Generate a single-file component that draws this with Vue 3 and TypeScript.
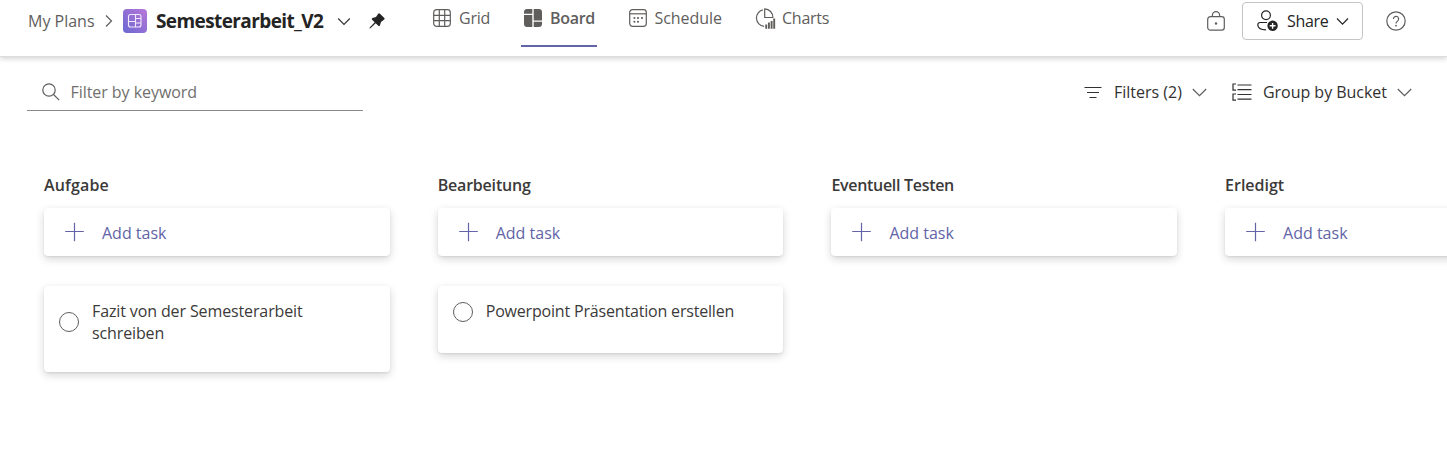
<script setup lang="ts">
interface Bucket {
  name: string
  key: string
  tasks: { key: string; lines: string[] }[]
}

const buckets: Bucket[] = [
  { name: 'Aufgabe', key: 'aufgabe', tasks: [{ key: 'fazit', lines: ['Fazit von der Semesterarbeit', 'schreiben'] }] },
  { name: 'Bearbeitung', key: 'bearbeitung', tasks: [{ key: 'powerpoint', lines: ['Powerpoint Präsentation erstellen'] }] },
  { name: 'Eventuell Testen', key: 'testen', tasks: [] },
  { name: 'Erledigt', key: 'erledigt', tasks: [] },
]
</script>

<template>
  <div class="planner">
    <header class="topbar">
      <nav class="crumbs">
        <span class="plans">My Plans</span>
        <svg class="crumb-arrow" width="8" height="14" viewBox="0 0 8 14"><path d="M1 1.5 6.5 7 1 12.5" /></svg>
        <svg class="logo" width="24" height="24" viewBox="0 0 24 24">
          <defs>
            <linearGradient id="logo-fill" x1="0" y1="1" x2="1" y2="0">
              <stop offset="0" stop-color="#6a68d2" />
              <stop offset="1" stop-color="#b877d8" />
            </linearGradient>
          </defs>
          <rect width="24" height="24" rx="4" fill="url(#logo-fill)" />
          <g fill="none" stroke="#f3e9fc" stroke-width="1.1">
            <rect x="5.500" y="5.500" width="12.500" height="12.500" rx="2" />
            <path d="M12.500 5.500V18M5.500 12.500h7M12.500 9.500h5.500M12.500 14h5.500" />
          </g>
        </svg>
        <h1 class="title">Semesterarbeit_V2</h1>
        <svg class="title-chevron" width="14" height="9" viewBox="0 0 14 9"><path d="m1.200 1.500 5.800 5.800 5.800-5.800" /></svg>
        <svg class="pin" width="16" height="16" viewBox="0 0 16 16">
          <path d="M9.200.7a1 1 0 0 1 1.500-.1l4.600 4.500a1 1 0 0 1-.1 1.500L12 8.900l-1.100 3.500a1 1 0 0 1-1.600.4L6.700 10.200 1.400 15.300.4 15.600.7 14.600 5.700 9.300 3.100 6.700a1 1 0 0 1 .4-1.600L7 4z" />
        </svg>
      </nav>

      <nav class="tabs">
        <a class="tab grid">
          <svg width="18" height="18" viewBox="0 0 18 18">
            <rect x=".7" y=".7" width="16.600" height="16.600" rx="2.800" />
            <path d="M6.300.7v16.600M11.700.7v16.600M.7 6.300h16.600M.7 11.700h16.600" />
          </svg>
          <span class="tab-label">Grid</span>
        </a>
        <a class="tab board">
          <svg width="18" height="18" viewBox="0 0 18 18">
            <path class="solid" d="M3.200 0h5.100v4.700H0V3.200A3.200 3.200 0 0 1 3.200 0zM0 6h8.300v12H3.200A3.200 3.200 0 0 1 0 14.800zM9.700 0h5.100A3.200 3.200 0 0 1 18 3.200v8.300H9.700zM9.700 12.800H18v2a3.200 3.200 0 0 1-3.200 3.200H9.700z" />
          </svg>
          <span class="tab-label">Board</span>
        </a>
        <a class="tab schedule">
          <svg width="18" height="18" viewBox="0 0 18 18">
            <rect x=".7" y=".7" width="16.600" height="16.600" rx="2.800" />
            <path d="M.7 4.800h16.600" />
            <g class="solid">
              <circle cx="9" cy="9" r="1.050" /><circle cx="13" cy="9" r="1.050" /><circle cx="5.400" cy="9" r="1.050" />
              <circle cx="5.400" cy="12.800" r="1.050" /><circle cx="9" cy="12.800" r="1.050" />
            </g>
          </svg>
          <span class="tab-label">Schedule</span>
        </a>
        <a class="tab charts">
          <svg width="21" height="21" viewBox="0 0 21 21">
            <path d="M7.800 1.800A8.400 8.400 0 0 0 9 18.300" />
            <path d="M9.700.9v8.600h8.200A8.400 8.400 0 0 0 9.700.9z" />
            <path class="bars" d="M11.200 20.700v-4.200M13.900 20.700v-6.200M16.600 20.700v-7.600M19.200 20.700V10.600" />
          </svg>
          <span class="tab-label">Charts</span>
        </a>
      </nav>

      <div class="actions">
        <svg class="lock" width="18" height="20" viewBox="0 0 18 20">
          <rect x=".7" y="5.700" width="16.600" height="13.500" rx="2.600" />
          <path d="M5.400 5.700V4.200a3.600 3.600 0 0 1 7.200 0v1.500" />
          <circle class="dot" cx="9" cy="12.500" r="1.200" />
        </svg>
        <button class="share" type="button">
          <svg class="person" width="21" height="22" viewBox="0 0 21 22">
            <circle cx="9" cy="5.200" r="4.400" />
            <path d="M10 12.500H3.100A2.300 2.300 0 0 0 .8 14.800c0 3 3 5 8.200 5" />
            <circle class="badge" cx="15.600" cy="15.800" r="5.200" />
            <path class="plus" d="M15.600 12.900v5.800M12.700 15.800h5.800" />
          </svg>
          <span class="share-label">Share</span>
          <svg class="share-chevron" width="13" height="9" viewBox="0 0 13 9"><path d="m1 1.500 5.500 5.600L12 1.500" /></svg>
        </button>
        <svg class="help" width="20" height="20" viewBox="0 0 20 20">
          <circle cx="10" cy="10" r="9.200" />
          <path d="M7.400 7.900a2.600 2.600 0 1 1 4.300 2C10.600 10.800 10 11.300 10 12.500" />
          <circle class="dot" cx="10" cy="14.700" r=".9" />
        </svg>
      </div>
    </header>

    <div class="toolbar">
      <label class="search">
        <svg width="18" height="18" viewBox="0 0 18 18"><circle cx="7" cy="7" r="6.200" /><path d="m11.500 11.500 5.700 5.700" /></svg>
        <span class="search-label">Filter by keyword</span>
      </label>
      <div class="view-options">
        <svg class="filter-icon" width="18" height="13" viewBox="0 0 18 13"><path d="M.5 1.500h17M3 6.500h12M5.500 11.500h7" /></svg>
        <span class="filters-label">Filters (2)</span>
        <svg class="chev" width="15" height="9" viewBox="0 0 15 9"><path d="m.8 1 6.700 6.700L14.200 1" /></svg>
        <svg class="group-icon" width="20" height="18" viewBox="0 0 20 18">
          <path d="M5.500 2h14M5.500 6.700h14M5.500 11.500h14M5.500 16.200h14" />
          <path d="M4 1H1v6.200h3M4 11H1v6.200h3" />
        </svg>
        <span class="group-label">Group by Bucket</span>
        <svg class="chev last" width="15" height="9" viewBox="0 0 15 9"><path d="m.8 1 6.700 6.700L14.200 1" /></svg>
      </div>
    </div>

    <main class="board-area">
      <section v-for="bucket in buckets" :key="bucket.key" class="bucket" :class="bucket.key">
        <h2 class="bucket-name"><span>{{ bucket.name }}</span></h2>
        <button class="card add" type="button">
          <svg width="20" height="20" viewBox="0 0 20 20"><path d="M10.500 .8v18.400M1.200 9.500h18.600" /></svg>
          <span>Add task</span>
        </button>
        <article v-for="task in bucket.tasks" :key="task.key" class="card task" :class="task.key">
          <div class="task-main">
            <i class="check"></i>
            <p class="task-title"><span v-for="line in task.lines" :key="line">{{ line }}</span></p>
          </div>
        </article>
      </section>
    </main>
  </div>
</template>

<style>
html,
body {
  background: #fff;
  overflow: hidden;
}
</style>

<style scoped>
.planner {
  width: 1447px;
  height: 451px;
  overflow: hidden;
  background: #fff;
  color: #3b3a39;
  font: 400 16px/22px 'Open Sans', 'Noto Sans', sans-serif;
  white-space: nowrap;
}
svg {
  display: block;
  flex: none;
  overflow: visible;
  fill: none;
  stroke: currentColor;
  stroke-width: 1.2;
}
.logo {
  stroke: none;
}
h1,
h2,
p {
  margin: 0;
}
button {
  font: inherit;
  color: inherit;
  padding: 0;
}
.topbar {
  display: flex;
  height: 56px;
  border-bottom: 1px solid #dcdcdc;
  box-shadow: 0 2px 5px rgba(0, 0, 0, 0.17);
}
.crumbs {
  display: flex;
  align-items: center;
  height: 42px;
  width: 405px;
  padding-left: 28px;
}
.plans {
  width: 77px;
  color: #605e5c;
}
.crumb-arrow {
  color: #605e5c;
  margin-right: 10px;
}
.title {
  width: 181px;
  margin-left: 9px;
  color: #242424;
  font-size: 19px;
  font-weight: 700;
  letter-spacing: -0.6px;
}
.title-chevron {
  color: #333;
}
.pin {
  margin-left: 18px;
  fill: #242424;
  stroke: none;
}
.tabs {
  display: flex;
  color: #605e5c;
}
.tab {
  display: flex;
  align-items: center;
  box-sizing: border-box;
  height: 47px;
  padding-bottom: 9px;
  border-bottom: 2px solid transparent;
}
.tab-label {
  margin-left: 8px;
}
.grid {
  width: 88px;
}
.grid .tab-label {
  letter-spacing: -0.2px;
}
.board {
  width: 76px;
  padding-left: 3px;
  border-bottom-color: #6264a7;
  font-weight: 600;
}
.board .tab-label {
  letter-spacing: -0.3px;
}
.schedule {
  margin-left: 32px;
  width: 126px;
}
.schedule .tab-label {
  margin-left: 7.5px;
  letter-spacing: -0.05px;
}
.solid {
  fill: currentColor;
  stroke: none;
}
.bars {
  stroke-width: 1.9;
}
.charts .tab-label {
  margin-left: 6px;
  letter-spacing: -0.25px;
}
.actions {
  display: flex;
  align-items: center;
  height: 42px;
  margin-left: auto;
  padding-right: 41px;
  color: #605e5c;
}
.dot {
  fill: currentColor;
  stroke: none;
}
.share {
  display: flex;
  align-items: center;
  box-sizing: border-box;
  width: 121px;
  height: 38px;
  margin: 0 23px 0 17px;
  padding-left: 14px;
  border: 1px solid #c4c4c4;
  border-radius: 4px;
  background: #fff;
  color: #242424;
}
.badge {
  fill: #242424;
  stroke: none;
}
.plus {
  stroke: #fff;
  stroke-width: 1.4;
}
.share-label {
  width: 49px;
  margin-left: 9px;
  text-align: left;
  letter-spacing: -0.3px;
}
.toolbar {
  display: flex;
  align-items: center;
  height: 34px;
  padding: 18px 35px 0 27px;
}
.search {
  display: flex;
  align-items: center;
  box-sizing: border-box;
  width: 336px;
  height: 38px;
  padding-left: 15px;
  border-bottom: 1px solid #8a8886;
  color: #605e5c;
}
.search-label {
  margin-left: 10.5px;
  color: #716f6d;
  letter-spacing: -0.05px;
}
.view-options {
  display: flex;
  align-items: center;
  margin-left: auto;
  color: #323130;
}
.filters-label {
  width: 78px;
  margin-left: 12px;
}
.chev {
  color: #605e5c;
}
.group-icon {
  margin-left: 25px;
}
.group-label {
  width: 134px;
  margin-left: 11px;
  letter-spacing: -0.03px;
}
.board-area {
  display: flex;
  gap: 48px;
  padding: 65px 0 0 44px;
}
.bucket {
  flex: none;
  width: 345.7px;
}
.bucket-name {
  height: 34px;
  font-size: 16px;
  font-weight: 600;
  line-height: 22px;
}
.aufgabe .bucket-name {
  letter-spacing: 0.15px;
}
.bearbeitung .bucket-name {
  letter-spacing: -0.2px;
}
.testen .bucket-name {
  letter-spacing: -0.3px;
}
.card {
  display: flex;
  box-sizing: border-box;
  width: 100%;
  border: 0;
  border-radius: 4px;
  background: #fff;
  box-shadow: 0 3px 8px rgba(0, 0, 0, 0.17), 0 1px 2px rgba(0, 0, 0, 0.07);
}
.add {
  align-items: center;
  height: 48px;
  padding-left: 20px;
  color: #6264a7;
}
.add span {
  margin-left: 18px;
  padding-top: 1px;
}
.task {
  margin-top: 30px;
  padding: 14px 0 0 15px;
}
.fazit {
  height: 86px;
  letter-spacing: -0.12px;
}
.powerpoint {
  height: 67px;
  letter-spacing: -0.18px;
}
.powerpoint .check {
  margin-top: 2px;
}
.task-main {
  display: flex;
  align-items: center;
  align-self: flex-start;
}
.check {
  box-sizing: border-box;
  width: 20px;
  height: 20px;
  border: 1px solid #605e5c;
  border-radius: 50%;
}
.task-title {
  margin-left: 13px;
}
.task-title span {
  display: block;
}
</style>
